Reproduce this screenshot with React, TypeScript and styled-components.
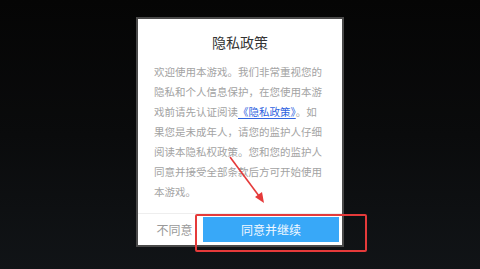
import styled, { createGlobalStyle } from "styled-components";

const GlobalStyle = createGlobalStyle`
  html, body {
    margin: 0;
    padding: 0;
  }
  body {
    font-family: "Noto Sans CJK SC", "Noto Sans", sans-serif;
  }
`;

const Screen = styled.div`
  position: relative;
  width: 480px;
  height: 269px;
  overflow: hidden;
  background: linear-gradient(180deg, #050505 0%, #0a0b0c 50%, #111417 100%);
  display: flex;
  justify-content: center;
  align-items: flex-start;
  padding-top: 17px;
  box-sizing: border-box;
`;

const Card = styled.div`
  width: 204px;
  border: 2px solid #4a4a4a;
  background: #ffffff;
  display: flex;
  flex-direction: column;
`;

const Title = styled.h1`
  margin: 13px 0 0;
  font-size: 14px;
  line-height: 20px;
  font-weight: 400;
  text-align: center;
  color: #333333;
`;

const Body = styled.p`
  margin: 10px 0 0 16px;
  width: 170px;
  font-size: 10.5px;
  line-height: 20px;
  color: #a3a3a3;
  word-break: break-all;
`;

const Link = styled.a`
  color: #2f63e0;
  text-decoration: underline;
  text-underline-offset: 2px;
`;

const Footer = styled.div`
  margin-top: 11px;
  border-top: 1px solid #eeeeee;
  height: 31px;
  display: flex;
  align-items: center;
  padding: 0 3px 0 0;
`;

const Decline = styled.div`
  width: 65px;
  padding-left: 8px;
  box-sizing: border-box;
  text-align: center;
  font-size: 12px;
  color: #999999;
`;

const Accept = styled.div`
  flex: 1;
  height: 25px;
  background: #38a8f8;
  color: #f2f8ff;
  font-size: 12px;
  display: flex;
  align-items: center;
  justify-content: center;
`;

const Highlight = styled.div`
  position: absolute;
  left: 195px;
  top: 214px;
  width: 172px;
  height: 38px;
  border: 2px solid #e53a3a;
  border-radius: 2px;
  box-sizing: border-box;
`;

const Arrow = styled.svg`
  position: absolute;
  left: 0;
  top: 0;
  pointer-events: none;
`;

export default function App() {
  return (
    <>
      <GlobalStyle />
      <Screen>
        <Card>
          <Title>隐私政策</Title>
          <Body>
            欢迎使用本游戏。我们非常重视您的隐私和个人信息保护，在您使用本游戏前请先认证阅读
            <Link>《隐私政策》</Link>
            。如果您是未成年人，请您的监护人仔细阅读本隐私权政策。您和您的监护人同意并接受全部条款后方可开始使用本游戏。
          </Body>
          <Footer>
            <Decline>不同意</Decline>
            <Accept>同意并继续</Accept>
          </Footer>
        </Card>
        <Highlight />
        <Arrow width="480" height="269" viewBox="0 0 480 269">
          <line x1="230" y1="157" x2="259" y2="196" stroke="#e53a3a" strokeWidth="1.6" />
          <polygon points="264,203 255,197 262,192" fill="#e53a3a" />
        </Arrow>
      </Screen>
    </>
  );
}
